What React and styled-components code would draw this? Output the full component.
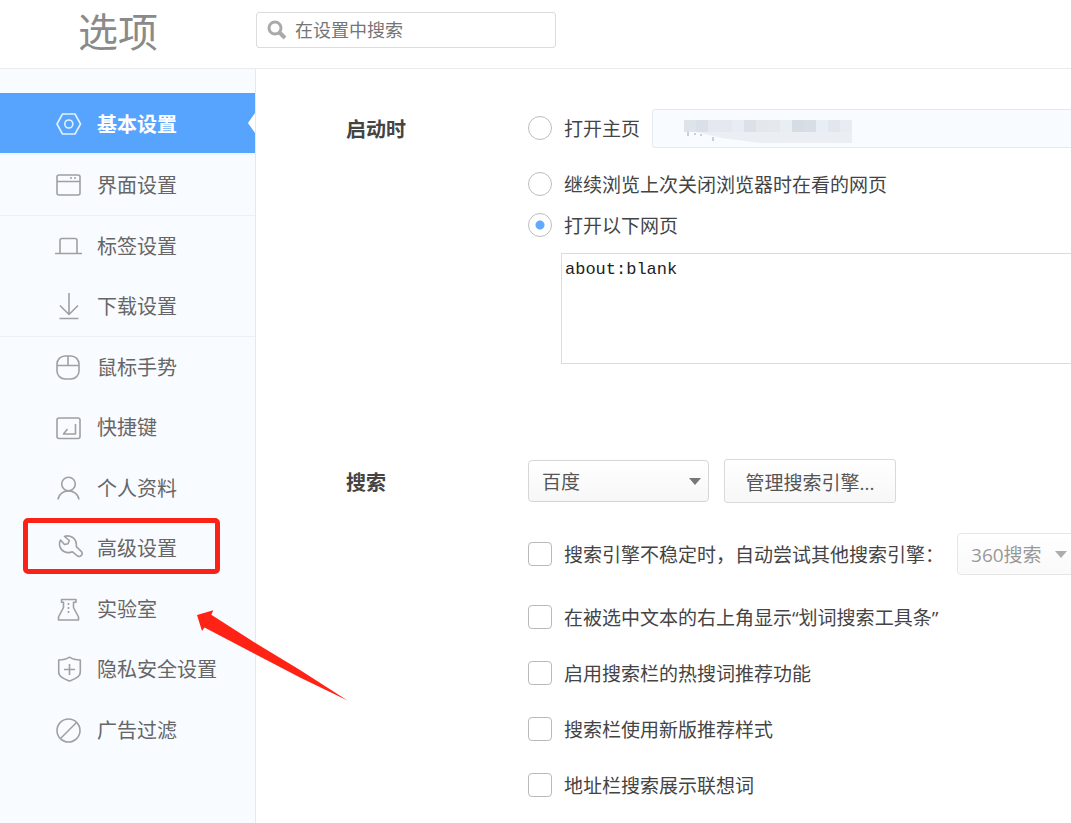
import React from "react";
import styled, { createGlobalStyle, css } from "styled-components";

const Global = createGlobalStyle`
  *, *::before, *::after { box-sizing: border-box; }
  body {
    margin: 0;
    background: #fff;
    color: #444;
    font-family: "Open Sans", "Noto Sans CJK SC", sans-serif;
    font-size: 19px;
    line-height: 28px;
  }
  button, input, select, textarea { font-family: inherit; font-size: inherit; color: inherit; }
`;

const Page = styled.div`
  display: flex;
  flex-direction: column;
  min-height: 100vh;
  overflow: hidden;
`;

const Header = styled.header`
  display: flex;
  align-items: flex-start;
  height: 69px;
  border-bottom: 1px solid #ebebeb;
`;

const Title = styled.h1`
  width: 256px;
  margin: 0;
  padding-left: 78px;
  font-size: 40px;
  line-height: 64px;
  font-weight: 400;
  color: #8a8a8a;
`;

const SearchBox = styled.label`
  display: flex;
  align-items: center;
  gap: 8px;
  width: 300px;
  height: 36px;
  margin-top: 12px;
  padding: 0 10px;
  border: 1px solid #dcdcdc;
  border-radius: 3px;

  svg { flex: none; }
`;

const SearchInput = styled.input`
  flex: 1;
  min-width: 0;
  padding: 0;
  border: 0;
  outline: 0;
  background: transparent;
  font-size: 18px;
  &::placeholder { color: #757575; opacity: 1; }
`;

const Body = styled.div`
  display: flex;
  flex: 1;
`;

const Sidebar = styled.nav`
  position: relative;
  flex: none;
  width: 256px;
  padding-top: 24px;
  background: #f8fbff;
  border-right: 1px solid #e4e8f0;
`;

const NavGroup = styled.div`
  border-bottom: 1px solid ${(p) => (p.$divided ? "#edf1f7" : "transparent")};
`;

const NavItem = styled.a`
  position: relative;
  display: flex;
  align-items: center;
  gap: 14px;
  height: 60px;
  padding-left: 55px;
  font-size: 20px;
  color: #666;
  text-decoration: none;

  svg {
    flex: none;
    color: #a0a0a0;
  }

  ${(p) =>
    p.$active &&
    css`
      height: 62px;
      padding-top: 2px;
      border-bottom: 2px solid #ecf6ff;
      background: #57a4ff;
      background-clip: padding-box;
      color: #fff;
      font-weight: 700;
      svg { color: #e4f1ff; }
      &::after {
        content: "";
        position: absolute;
        right: 0;
        top: 20px;
        border: 10px solid transparent;
        border-left: 0;
        border-right: 7px solid #fff;
      }
    `}
`;

const Label = styled.span`
  padding-top: 2px;
`;

const Highlight = styled.span`
  position: absolute;
  left: 23px;
  top: 0;
  width: 197px;
  height: 56px;
  border: 5px solid #fb2318;
  border-radius: 5px;
  pointer-events: none;
`;

const Arrow = styled.svg`
  position: absolute;
  left: 196px;
  top: 540px;
  z-index: 2;
  pointer-events: none;
`;

const Main = styled.main`
  flex: 1;
  min-width: 0;
  padding: 39px 0 18px 90px;
  overflow: hidden;
`;

const Section = styled.section`
  display: flex;
  margin-bottom: ${(p) => p.$after || 0}px;
`;

const Heading = styled.h2`
  flex: none;
  width: 182px;
  margin: 0;
  font-size: 20px;
  line-height: ${(p) => p.$line}px;
  font-weight: 700;
`;

const Fields = styled.div`
  flex: 1;
  min-width: 0;
`;

const Row = styled.div`
  display: flex;
  align-items: center;
  gap: ${(p) => p.$gap || 0}px;
  height: ${(p) => p.$height || 40}px;
  margin-top: ${(p) => p.$space || 0}px;
`;

const Option = styled.label`
  display: flex;
  align-items: center;
  gap: 12px;
  flex: none;
  white-space: nowrap;
`;

const Radio = styled.input.attrs({ type: "radio" })`
  appearance: none;
  width: 24px;
  height: 24px;
  margin: 0;
  border: 1px solid #bdbdbd;
  border-radius: 50%;
  background: #fff;
  &:checked { background: radial-gradient(circle, #60a9fb 4px, #fff 5px); }
`;

const Check = styled.input.attrs({ type: "checkbox" })`
  appearance: none;
  width: 24px;
  height: 24px;
  margin: 0;
  border: 1px solid #bababa;
  border-radius: 4px;
  background: #fff;
`;

const HomeField = styled.div`
  position: relative;
  flex: 1;
  height: 39px;
  margin-right: -4px;
`;

const HomeInput = styled.input`
  width: 100%;
  height: 100%;
  border: 1px solid #e3e9f0;
  border-radius: 3px;
  background: #f8fbff;
`;

const Mosaic = styled.svg`
  position: absolute;
  left: 32px;
  top: 11px;
`;

const Pages = styled.textarea`
  display: block;
  width: calc(100% - 29px);
  height: 111px;
  margin: 8px 0 0 33px;
  padding: 3px;
  border: 1px solid #dcdcdc;
  outline: 0;
  resize: none;
  color: #222;
  font-family: "Liberation Mono", monospace;
  font-size: 17px;
  line-height: 26px;
`;

const SelectWrap = styled.span`
  position: relative;
  flex: none;
  width: ${(p) => p.$width}px;
  height: 42px;
  opacity: ${(p) => (p.$muted ? 0.6 : 1)};
  &::after {
    content: "";
    position: absolute;
    right: 8px;
    top: 18px;
    border: 6px solid transparent;
    border-bottom: 0;
    border-top: 7px solid #777;
    pointer-events: none;
  }
`;

const Select = styled.select`
  appearance: none;
  width: 100%;
  height: 100%;
  padding: 2px 13px 0;
  border: 1px solid #d6d6d6;
  border-radius: 4px;
  background: linear-gradient(#fff, #f7f7f7);
  color: #555;
  opacity: 1;
`;

const Button = styled.button`
  height: 44px;
  width: 172px;
  padding: 2px 0 0;
  border: 1px solid #d9d9d9;
  border-radius: 3px;
  background: linear-gradient(#fff, #f7f7f7);
  color: #555;
`;

const icons = {
  basic: (
    <>
      <path d="M7.5 4H20l5.5 10L20 24H7.5L2 14z" />
      <circle cx="13.8" cy="14" r="4" />
    </>
  ),
  window: (
    <>
      <rect x="2" y="4" width="23" height="20" rx="2" />
      <path d="M2 10.5h23M15 7h2M19 7h2" />
    </>
  ),
  tab: <path d="M0 21.5h27M5 21.5v-13q0-2 2-2h13q2 0 2 2v13" />,
  download: <path d="M14 1v22M5 13.5l9 9 9-9M4.5 26.5h19" />,
  mouse: (
    <>
      <rect x="2" y="3" width="22" height="23" rx="8" />
      <path d="M2 12.5h22M13 3v9.5" />
    </>
  ),
  shortcut: (
    <>
      <rect x="2" y="5" width="23" height="20.5" rx="2" />
      <path d="M20.5 11v10h-12l4-5" />
    </>
  ),
  profile: (
    <>
      <circle cx="13.5" cy="10" r="6.8" />
      <path d="M3 25.5c1.5-11.5 19.5-11.5 21 0" />
    </>
  ),
  wrench: (
    <path d="M9.5 2.5C13 1 17.500 2.500 19.800 5.500c1.500 2 1.800 4.500 1.500 7.200l5.200 5c2 2.500-1.200 6-4 4.300l-5-4.200c-3 1.200-5.500 1.200-8 0C4.500 15.500 3.500 10 5.500 6l4 4.500 3.500-.8 1.300-3.200z" />
  ),
  lab: (
    <>
      <path d="M6.5 4.5H21v2.700h-2.500v5.300l5 9.500v3h-20v-3l5-9.500V7.200h-2z" />
      <path d="M13.5 8v12" strokeDasharray="2 2" />
    </>
  ),
  shield: (
    <>
      <path d="M14.5 2.200c3 2 7 2.800 10.800 2.800v12c0 5-5.800 7-10.800 9-5-2-10.800-4-10.800-9V5c3.800 0 7.800-.8 10.800-2.800z" />
      <path d="M14.5 9v11M9 14.500h11" />
    </>
  ),
  block: (
    <>
      <circle cx="13.5" cy="14.5" r="11.5" />
      <path d="M5.500 22.500l16-16" />
    </>
  ),
};

function Icon({ name }) {
  return (
    <svg width="28" height="28" viewBox="0 0 28 28" fill="none" stroke="currentColor" strokeWidth="1.6" strokeLinejoin="round" aria-hidden="true">
      {icons[name]}
    </svg>
  );
}

const groups = [
  { divided: true, items: [["basic", "基本设置"], ["window", "界面设置"]] },
  { divided: true, items: [["tab", "标签设置"], ["download", "下载设置"]] },
  { items: [["mouse", "鼠标手势"], ["shortcut", "快捷键"]] },
  { items: [["profile", "个人资料"], ["wrench", "高级设置"]] },
  { items: [["lab", "实验室"], ["shield", "隐私安全设置"]] },
  { items: [["block", "广告过滤"]] },
];

const searchOptions = [
  { text: "在被选中文本的右上角显示“划词搜索工具条”", space: 23 },
  { text: "启用搜索栏的热搜词推荐功能", space: 16 },
  { text: "搜索栏使用新版推荐样式", space: 16 },
  { text: "地址栏搜索展示联想词", space: 16 },
];

const mosaicTop = ["#dfe3ea", "#dae0e9", "#e5e8ee", "#e5e8ee", "#e8edf5", "#dce0e8", "#e4e8ed", "#e5e8ed", "#e9eef3", "#d6dce3", "#d8dde6", "#e8eef6", "#e3e6ec", "#e8edf4"];

export default function App() {
  return (
    <Page>
      <Global />
      <Header>
        <Title>选项</Title>
        <SearchBox>
          <svg width="20" height="20" viewBox="0 0 20 20" fill="none" stroke="#aaa" aria-hidden="true">
            <circle cx="8" cy="8" r="6" strokeWidth="3" />
            <path d="M12 12l6 6" strokeWidth="4" />
          </svg>
          <SearchInput type="search" aria-label="在设置中搜索" placeholder="在设置中搜索" />
        </SearchBox>
      </Header>
      <Body>
        <Sidebar>
          {groups.map((group) => (
            <NavGroup key={group.items[0][0]} $divided={group.divided}>
              {group.items.map(([icon, label]) => (
                <NavItem key={icon} href={`#${icon}`} $active={icon === "basic"}>
                  <Icon name={icon} />
                  <Label>{label}</Label>
                  {icon === "wrench" && <Highlight />}
                </NavItem>
              ))}
            </NavGroup>
          ))}
          <Arrow width="152" height="94" viewBox="0 0 152 94" fill="#ff2316" aria-hidden="true">
            <path d="M1 6L17.300 1.300l-2 4.500L59 33.700 104 61l47.500 30.500L104 68.500 59 45 8.500 18.500 6 22z" />
          </Arrow>
        </Sidebar>
        <Main>
          <Section $after={95}>
            <Heading $line={44}>启动时</Heading>
            <Fields>
              <Row $gap={12}>
                <Option>
                  <Radio name="startup" />
                  <Label>打开主页</Label>
                </Option>
                <HomeField>
                  <HomeInput aria-label="主页地址" />
                  <Mosaic width="170" height="26" viewBox="0 0 170 26" aria-hidden="true">
                    {mosaicTop.map((fill, i) => (
                      <rect key={i} x={i * 12} width="12" height="12" fill={fill} />
                    ))}
                    <path d="M12 12h156v11H76L38 18z" fill="#ebeff4" />
                    <path d="M4 12v4M11 13v2M17 14v2M29 17v4" stroke="#98a3b0" />
                  </Mosaic>
                </HomeField>
              </Row>
              <Row $space={16}>
                <Option>
                  <Radio name="startup" />
                  <Label>继续浏览上次关闭浏览器时在看的网页</Label>
                </Option>
              </Row>
              <Row $space={1}>
                <Option>
                  <Radio name="startup" defaultChecked />
                  <Label>打开以下网页</Label>
                </Option>
              </Row>
              <Pages aria-label="启动网页" defaultValue="about:blank" spellCheck={false} />
            </Fields>
          </Section>
          <Section>
            <Heading $line={48}>搜索</Heading>
            <Fields>
              <Row $height={44} $gap={15}>
                <SelectWrap $width={181}>
                  <Select aria-label="搜索引擎">
                    <option>百度</option>
                  </Select>
                </SelectWrap>
                <Button type="button">管理搜索引擎...</Button>
              </Row>
              <Row $space={31} $gap={13}>
                <Option>
                  <Check />
                  <Label>搜索引擎不稳定时，自动尝试其他搜索引擎：</Label>
                </Option>
                <SelectWrap $width={118} $muted>
                  <Select aria-label="备用搜索引擎" disabled>
                    <option>360搜索</option>
                  </Select>
                </SelectWrap>
              </Row>
              {searchOptions.map((option) => (
                <Row key={option.text} $space={option.space}>
                  <Option>
                    <Check />
                    <Label>{option.text}</Label>
                  </Option>
                </Row>
              ))}
            </Fields>
          </Section>
        </Main>
      </Body>
    </Page>
  );
}
